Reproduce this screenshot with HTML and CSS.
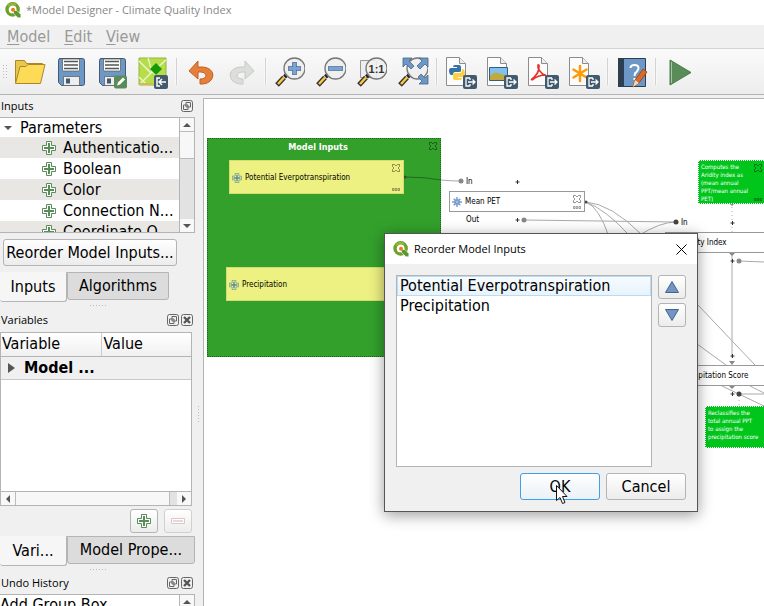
FILE: index.html
```html
<!DOCTYPE html>
<html lang="en">
<head>
    <meta charset="UTF-8">
    <meta name="viewport" content="width=device-width, initial-scale=1.0">
    <title>Model Designer - Climate Quality Index</title>
    <link rel="stylesheet" href="styles.css">
</head>
<body>
    <!-- Shared icons -->
    <svg class="sprite" aria-hidden="true">
        <symbol id="logo" viewBox="0 0 16 16">
            <circle cx="7.6" cy="7.4" r="5.6" fill="none" stroke="#6fa02c" stroke-width="3.4"/>
            <path d="M3 4.5A5.6 5.6 0 0 1 11 3" fill="none" stroke="#93b72f" stroke-width="2"/>
            <path d="M8.5 8.5h3.4l4 4v3.3h-3l-4.4-4.4z" fill="#5c9632" stroke="#fff" stroke-width=".6"/>
            <circle cx="8" cy="7.8" r="2" fill="#ee7913"/>
        </symbol>
        <symbol id="plus" viewBox="0 0 14 14">
            <path d="M4.5.5h5v4h4v5h-4v4h-5v-4h-4v-5h4z" fill="#fff" stroke="#5a8c5a"/>
            <path d="M6 2h2v4h4v2H8v4H6V8H2V6h4z" fill="#5a8c5a"/>
        </symbol>
        <symbol id="page" viewBox="0 0 30 30">
            <path d="M4.5.5h13l6 6v22h-19z" fill="#fcfcfc" stroke="#8c8c8c"/>
            <path d="M17.5.5v6h6" fill="#eee" stroke="#8c8c8c"/>
        </symbol>
        <symbol id="export" viewBox="0 0 14 14">
            <rect width="14" height="14" rx="2" fill="#415a6e"/>
            <path d="M7 3H3v8h4M5 7h7M9.5 4.5 12 7 9.5 9.5M7 3v2M7 9v2" fill="none" stroke="#fff" stroke-width="1.3"/>
        </symbol>
        <symbol id="floppy" viewBox="0 0 30 30">
            <path d="M3.5 1.5h23q2 0 2 2v23q0 2-2 2h-21l-3-3v-22q0-2 2-2z" fill="#6d97c4" stroke="#415a75"/>
            <path d="M6.5 2h17v11q0 1-1 1h-15q-1 0-1-1z" fill="#fcfcfc" stroke="#555753" stroke-width=".7"/>
            <path d="M8 4.5h14M8 8h14M8 11.5h14" stroke="#555753" stroke-width="1.4"/>
            <path d="M7.500 19.500h16v9h-16z" fill="#eee" stroke="#555753" stroke-width=".7"/>
            <path d="M10 21.500h4v5h-4z" fill="#415a75"/>
        </symbol>
        <symbol id="lens" viewBox="0 0 30 30">
            <path d="M2 28 9 20.500" stroke="#333" stroke-width="5"/>
            <path d="M3 27 9 20.500" stroke="#fcc93b" stroke-width="2.500"/>
            <path d="m9.500 20 3-3" stroke="#222" stroke-width="4"/>
            <circle cx="19.500" cy="11.500" r="10.500" fill="#eee" fill-opacity=".9" stroke="#777" stroke-width="1.300"/>
        </symbol>
        <symbol id="float" viewBox="0 0 12 12">
            <rect x=".5" y=".5" width="11" height="11" rx="2" fill="none" stroke="#666"/>
            <path d="M5 2.500h4.500V7H5zM2.500 5H7v4.500H2.500z" fill="#f0f0f0" stroke="#666"/>
        </symbol>
        <symbol id="close" viewBox="0 0 12 12">
            <rect x=".5" y=".5" width="11" height="11" rx="2" fill="none" stroke="#666"/>
            <path d="m3 3 6 6M9 3 3 9" stroke="#555" stroke-width="2.400"/>
        </symbol>
        <symbol id="node-x" viewBox="0 0 8 8">
            <path d="M.5.5h2L4 2 5.500.5h2v2L6 4l1.500 1.500v2h-2L4 6 2.500 7.500h-2v-2L2 4 .5 2.500z" fill="none" stroke="#000" stroke-opacity=".45" stroke-width=".9"/>
        </symbol>
        <symbol id="node-dots" viewBox="0 0 8 3">
            <path d="M.5.500h1.500v2H.5zM3.200.500h1.500v2H3.200zM6 .500h1.500v2H6z" fill="none" stroke="#000" stroke-opacity=".45" stroke-width=".8"/>
        </symbol>
        <symbol id="gear" viewBox="0 0 12 12">
            <path d="M6 0v12M0 6h12M2 2l8 8M10 2l-8 8" stroke="#7c9fd0" stroke-width="1.800"/>
            <circle cx="6" cy="6" r="3.500" fill="#7c9fd0"/>
            <circle cx="6" cy="6" r="1" fill="#dbe6f4"/>
        </symbol>
    </svg>

    <header class="titlebar">
        <svg class="logo"><use href="#logo"/></svg>
        <span>*Model Designer - Climate Quality Index</span>
    </header>

    <nav class="menubar">
        <button class="menu"><u>M</u>odel</button>
        <button class="menu"><u>E</u>dit</button>
        <button class="menu"><u>V</u>iew</button>
    </nav>

    <div class="toolbar">
        <span class="grip"></span>
        <button class="tool" aria-label="Open model">
            <svg viewBox="0 0 30 30"><path d="M.5 25.500v-22h9l2 3h16v4" fill="#e7c74c" stroke="#a8882a"/><path d="M.5 26.500 5 9.500h6l2-2h17L25.500 26.500z" fill="#fddb56" stroke="#a8882a"/></svg>
        </button>
        <button class="tool" aria-label="Save model"><svg><use href="#floppy"/></svg></button>
        <button class="tool" aria-label="Save model as">
            <svg viewBox="0 0 30 30"><use href="#floppy" width="30" height="30"/><rect x="17" y="18.500" width="13" height="13" rx="2" fill="#5a8c5a"/><path d="m20 28.500 1-3 5-5 2 2-5 5z" fill="#fff"/></svg>
        </button>
        <button class="tool" aria-label="Save model in project">
            <svg viewBox="0 0 30 30"><path d="M1 1h27v27H1z" fill="#b6dd4c" stroke="#96b63c"/><path d="m1 4 12 12L28 3M13 16 1 28M10 1l4 14 14 9M1 20l8 8" fill="none" stroke="#eef7d2" stroke-width="1.300"/><path d="M1 26h14v2H1z" fill="#d4bc50"/><path d="m18 6 6 6-6 6-6-6z" fill="#169a03"/><rect x="16" y="18" width="14" height="14" rx="2" fill="#415a6e"/><path d="M22 21h-3v8h3M28 25h-7M24 22l-3 3 3 3" fill="none" stroke="#fff" stroke-width="1.500"/></svg>
        </button>
        <span class="separator"></span>
        <button class="tool" aria-label="Undo">
            <svg viewBox="0 0 30 30"><path d="m3 14 9-10v6h5q9 1 10 8-1 8-10 9h-3v-5q6 0 6-4-1-3-5-3h-3v7z" fill="#e67f3c" stroke="#c06224"/></svg>
        </button>
        <button class="tool" aria-label="Redo" disabled>
            <svg viewBox="0 0 30 30"><path d="m27 14-9-10v6h-5q-9 1-10 8 1 8 10 9h3v-5q-6 0-6-4 1-3 5-3h3v7z" fill="#dcdedb" stroke="#c8cac7"/></svg>
        </button>
        <span class="separator"></span>
        <button class="tool" aria-label="Zoom in">
            <svg viewBox="0 0 30 30"><use href="#lens" width="30" height="30"/><path d="M19.500 5v13M13 11.500h13" stroke="#44648a" stroke-width="4.500"/><path d="M19.500 5.500v12M13.500 11.500h12" stroke="#7aa3d4" stroke-width="3"/></svg>
        </button>
        <button class="tool" aria-label="Zoom out">
            <svg viewBox="0 0 30 30"><use href="#lens" width="30" height="30"/><path d="M12 11.500h15" stroke="#44648a" stroke-width="4.500"/><path d="M12.500 11.500h14" stroke="#7aa3d4" stroke-width="3"/></svg>
        </button>
        <button class="tool" aria-label="Zoom to 100%">
            <svg viewBox="0 0 30 30"><path d="M3.500 3.500h16v17h-16z" fill="#eee" stroke="#999"/><use href="#lens" width="30" height="30"/><text x="19.500" y="16" class="ratio">1:1</text></svg>
        </button>
        <button class="tool" aria-label="Zoom full">
            <svg viewBox="0 0 30 30"><use href="#lens" width="30" height="30"/><path d="M5 1h9l-3 3 5 5-3 3-5-5-3 3zM30 1v9l-3-3-5 5-3-3 5-5-3-3zM30 27h-9l3-3-4-4 3-3 4 4 3-3z" fill="#6d97c4" stroke="#44648a" stroke-width=".8"/></svg>
        </button>
        <span class="separator"></span>
        <button class="tool" aria-label="Export as Python script">
            <svg viewBox="0 0 30 30"><use href="#page" x="-4" width="30" height="30"/><path d="M9 8h4q2 0 2 2v4q0 1-2 1H9q-2 0-2 3H5q-2-1-2-4t2-3h6v-1H7q0-2 2-2z" fill="#3572a5"/><path d="M13 23H9q-2 0-2-2v-3q0-2 2-2h5q2 0 2-4h1q2 1 2 5t-2 3h-5v1h4q0 2-3 2z" fill="#fdcf41"/><use href="#export" x="17" y="18" width="14" height="14"/></svg>
        </button>
        <button class="tool" aria-label="Export as image">
            <svg viewBox="0 0 30 30"><use href="#page" x="-4" width="30" height="30"/><path d="M2.500 10.500h18v13h-18z" fill="#82c0ee" stroke="#345d7c"/><path d="M3 19q4-5 8-3t9 2v5H3z" fill="#c0a93e"/><use href="#export" x="17" y="18" width="14" height="14"/></svg>
        </button>
        <button class="tool" aria-label="Export as PDF">
            <svg viewBox="0 0 30 30"><use href="#page" x="-4" width="30" height="30"/><path d="M3 23q8-6 8-13 0-3-1-2-1 6 8 11M4 23q6-5 14-5" fill="none" stroke="#e5312b" stroke-width="1.700"/><use href="#export" x="17" y="18" width="14" height="14"/></svg>
        </button>
        <button class="tool" aria-label="Export as SVG">
            <svg viewBox="0 0 30 30"><use href="#page" x="-4" width="30" height="30"/><path d="M11 9v15M4.500 12.500l13 8M17.500 12.500l-13 8" stroke="#fc9c08" stroke-width="2.500" stroke-linecap="round"/><use href="#export" x="17" y="18" width="14" height="14"/></svg>
        </button>
        <span class="separator"></span>
        <button class="tool" aria-label="Edit model help">
            <svg viewBox="0 0 30 30"><path d="M1.500 1.500h27v28h-27z" fill="#6d97c4" stroke="#2c3e50"/><path d="M1 1h6v29H1z" fill="#2c3e50"/><path d="M13.500 11q0-3 4-3 4 0 4 3 0 2-2 4-2 1-2 4M17.500 21v2" fill="none" stroke="#fff" stroke-width="2"/><path d="m16 30 2-7 8-11 4 3-8 11z" fill="#dc6a25" stroke="#8c4418" stroke-width=".8"/><path d="m16 30 2-7 4 3z" fill="#f1d9bb"/></svg>
        </button>
        <span class="separator"></span>
        <button class="tool" aria-label="Run model">
            <svg viewBox="0 0 30 30"><path d="M5 3v25l21-12.500z" fill="#5a8c5a" stroke="#4a7a4a"/><path d="M6.500 5v21" stroke="#a5c5a5"/></svg>
        </button>
    </div>

    <div class="workspace">
        <aside class="sidebar">
            <section class="dock">
                <div class="dock-title">
                    <h2>Inputs</h2>
                    <button class="dock-button" aria-label="Float inputs"><svg><use href="#float"/></svg></button>
                </div>
                <div class="tree">
                    <ul class="tree-list">
                        <li class="tree-root"><span class="arrow-down"></span>Parameters</li>
                        <li class="tree-item"><svg><use href="#plus"/></svg>Authenticatio...</li>
                        <li class="tree-item"><svg><use href="#plus"/></svg>Boolean</li>
                        <li class="tree-item"><svg><use href="#plus"/></svg>Color</li>
                        <li class="tree-item"><svg><use href="#plus"/></svg>Connection N...</li>
                        <li class="tree-item"><svg><use href="#plus"/></svg>Coordinate O...</li>
                    </ul>
                    <div class="scroll-y">
                        <span class="scroll-end"><i class="arrow-up"></i></span>
                        <span class="thumb"></span>
                        <span class="scroll-end"><i class="arrow-down"></i></span>
                    </div>
                </div>
                <button class="button reorder">Reorder Model Inputs...</button>
                <div class="tabs">
                    <button class="tab active">Inputs</button>
                    <button class="tab">Algorithms</button>
                </div>
            </section>
            <div class="splitter"></div>

            <section class="dock">
                <div class="dock-title tall">
                    <h2>Variables</h2>
                    <button class="dock-button" aria-label="Float variables"><svg><use href="#float"/></svg></button>
                    <button class="dock-button" aria-label="Close variables"><svg><use href="#close"/></svg></button>
                </div>
                <div class="variables">
                    <table>
                        <thead>
                            <tr><th class="name-column">Variable</th><th>Value</th></tr>
                        </thead>
                        <tbody>
                            <tr><td colspan="2"><span class="arrow-right"></span>Model ...</td></tr>
                        </tbody>
                    </table>
                    <div class="scroll-x">
                        <span class="scroll-end"><i class="arrow-left"></i></span>
                        <span class="thumb"></span>
                        <span class="scroll-end"><i class="arrow-right"></i></span>
                    </div>
                </div>
                <div class="variable-actions">
                    <button class="button square" aria-label="Add variable"><svg class="plus-icon"><use href="#plus"/></svg></button>
                    <button class="button square" aria-label="Remove variable" disabled><svg class="plus-icon" viewBox="0 0 14 14"><path d="M.5 4.500h13v5H.5z" fill="#fff" stroke="#dcc8c8"/><path d="M2 6h10v2H2z" fill="#e8d8d8"/></svg></button>
                </div>
                <div class="tabs">
                    <button class="tab active">Vari...</button>
                    <button class="tab wide">Model Prope...</button>
                </div>
            </section>
            <div class="splitter"></div>

            <section class="dock history">
                <div class="dock-title">
                    <h2>Undo History</h2>
                    <button class="dock-button" aria-label="Float history"><svg><use href="#float"/></svg></button>
                    <button class="dock-button" aria-label="Close history"><svg><use href="#close"/></svg></button>
                </div>
                <div class="tree">
                    <ul class="tree-list">
                        <li class="history-item">Add Group Box</li>
                    </ul>
                    <div class="scroll-y">
                        <span class="scroll-end"><i class="arrow-up"></i></span>
                    </div>
                </div>
            </section>
        </aside>
        <div class="splitter-v"></div>

        <main class="canvas">
            <div class="group">Model Inputs<svg class="node-x"><use href="#node-x"/></svg></div>

            <!-- Connections, in window coordinates -->
            <svg class="links" viewBox="204 99 560 507">
                <g fill="none" stroke="#aaa">
                    <path d="M405 177q20 0 36 3" stroke="#1f6b1a"/>
                    <path d="M441 180q10 1 20 1M524 220l152 2M586 202q13 5 23 35M586 202q20 8 42 32M586 202q25 2 55 32M638 236q22-14 38-14"/>
                    <path d="M732 253v105M739 261l25 1M697 304l58 61M697 344l29 21M722 386l42 20M750 386l14 7M739 394h25"/>
                    <path d="M732 203v29M739 396v11" stroke-dasharray="1 3"/>
                </g>
                <g fill="#888">
                    <circle cx="461" cy="181" r="2.500"/>
                    <circle cx="524" cy="220" r="2.500"/>
                    <circle cx="739" cy="261" r="2.500"/>
                    <path d="M729 203h6l-3 3zM729 253h6l-3 3zM729 361h6l-3 4zM729 386h6l-3 3z"/>
                </g>
                <g fill="#444">
                    <circle cx="405" cy="177" r="1.500"/>
                    <circle cx="586" cy="202" r="1.500"/>
                    <circle cx="676" cy="222" r="2.500"/>
                    <circle cx="739" cy="394" r="2.500"/>
                </g>
                <path d="M515.500 182h4M517.500 180v4M515.500 220h4M517.500 218v4M730.500 223h4M732.500 221v4M730.500 261h4M732.500 259v4M730.500 356h4M732.500 354v4M730.500 394h4M732.500 392v4" stroke="#333"/>
            </svg>

            <div class="node input evapo"><svg class="node-icon"><use href="#plus"/></svg>Potential Everpotranspiration<svg class="node-x"><use href="#node-x"/></svg><svg class="node-dots"><use href="#node-dots"/></svg></div>
            <div class="node input precip"><svg class="node-icon"><use href="#plus"/></svg>Precipitation</div>
            <span class="port mean-in">In</span>
            <div class="node mean"><svg class="node-icon"><use href="#gear"/></svg>Mean PET<svg class="node-x"><use href="#node-x"/></svg><svg class="node-dots"><use href="#node-dots"/></svg></div>
            <span class="port mean-out">Out</span>
            <span class="port aridity-in">In</span>
            <div class="node aridity"><svg class="node-icon"><use href="#gear"/></svg>Aridity Index</div>
            <div class="node score"><svg class="node-icon"><use href="#gear"/></svg>Precipitation Score</div>
            <div class="comment aridity-note">Computes the<br>Aridity index as<br>(mean annual<br>PPT/mean annual<br>PET)<svg class="node-x"><use href="#node-x"/></svg><svg class="node-dots"><use href="#node-dots"/></svg></div>
            <div class="comment score-note">Reclassifies the<br>total annual PPT<br>to assign the<br>precipitation score</div>
        </main>
    </div>

    <!-- Reorder dialog -->
    <div class="dialog" role="dialog" aria-labelledby="dialog-title">
        <div class="dialog-title">
            <svg class="logo"><use href="#logo"/></svg>
            <h2 id="dialog-title">Reorder Model Inputs</h2>
            <button class="dialog-close" aria-label="Close"><svg viewBox="0 0 11 11"><path d="m.5.5 10 10M10.500.5l-10 10" stroke="#000"/></svg></button>
        </div>
        <div class="dialog-body">
            <ul class="input-list">
                <li class="selected">Potential Everpotranspiration</li>
                <li>Precipitation</li>
            </ul>
            <div class="order-buttons">
                <button class="button square" aria-label="Move up"><svg class="order-icon" viewBox="0 0 14 12"><path d="m7 .5 6.500 11H.5z" fill="#6d97c4" stroke="#44648a"/></svg></button>
                <button class="button square" aria-label="Move down"><svg class="order-icon" viewBox="0 0 14 12"><path d="m7 11.500 6.500-11H.5z" fill="#6d97c4" stroke="#44648a"/></svg></button>
            </div>
        </div>
        <div class="dialog-footer">
            <button class="button default">OK</button>
            <button class="button">Cancel</button>
        </div>
        <svg class="cursor" viewBox="0 0 12 19"><path d="M.5.500v15l3.500-3 2.500 6 2.500-1-2.500-6H11z" fill="#fff" stroke="#111"/></svg>
    </div>
</body>
</html>
```

FILE: styles.css
```css
* {
    box-sizing: border-box;
}

body {
    margin: 0;
    height: 100vh;
    display: flex;
    flex-direction: column;
    overflow: hidden;
    position: relative;
    background: #f0f0f0;
    color: #000;
    font-family: "DejaVu Sans Condensed", "Noto Sans", sans-serif;
    font-size: 16px;
    line-height: 20px;
}

button {
    font: inherit;
    color: inherit;
    border: none;
    background: none;
    padding: 0;
}

ul {
    list-style: none;
    margin: 0;
    padding: 0;
}

h2 {
    margin: 0;
    font-weight: normal;
    font-size: 11px;
}

svg {
    display: block;
    flex: none;
}

.sprite {
    position: absolute;
    width: 0;
    height: 0;
}

.logo {
    width: 16px;
    height: 16px;
}

/* Title bar and menu */
.titlebar {
    display: flex;
    align-items: center;
    gap: 5px;
    height: 25px;
    padding: 0 5px 6px;
    background: #fff;
    color: #888;
    font-family: "Open Sans", "Noto Sans", sans-serif;
    font-size: 11px;
}

.menubar {
    display: flex;
    gap: 14px;
    height: 24px;
    padding: 2px 7px 1px;
    color: #999;
    border-bottom: 1px solid #d4d4d4;
}

.menu u {
    text-underline-offset: 2px;
}

/* Toolbar */
.toolbar {
    display: flex;
    align-items: center;
    gap: 4px;
    height: 46px;
    padding-left: 2px;
    background: linear-gradient(#fafafa, #ededed);
    border-bottom: 1px solid #b4b4b4;
}

.grip {
    width: 5px;
    height: 16px;
    background: radial-gradient(#bbb 1px, transparent 1px) 0 0 / 3px 3px;
}

.tool {
    display: flex;
    justify-content: center;
    width: 37px;
}

.tool svg {
    width: 30px;
    height: 30px;
    overflow: visible;
}

.ratio {
    font: bold 11px "Liberation Sans", sans-serif;
    text-anchor: middle;
    fill: #333;
}

.separator {
    width: 3px;
    height: 27px;
    background: #d2d2d2;
    border: solid #f8f8f8;
    border-width: 0 1px;
}

/* Docks */
.workspace {
    flex: 1;
    display: flex;
    min-height: 0;
}

.sidebar {
    display: flex;
    flex-direction: column;
    width: 195px;
    flex: none;
    overflow: hidden;
}

.dock {
    flex: none;
}

.dock-title {
    display: flex;
    align-items: center;
    gap: 2px;
    height: 22px;
    padding: 0 2px 0 1px;
}

.dock-title.tall {
    height: 24px;
}

.dock-title h2 {
    flex: 1;
    font-family: "Open Sans", "Noto Sans", sans-serif;
}

.dock-button svg {
    width: 12px;
    height: 12px;
}

.tree {
    display: flex;
    height: 116px;
    background: #fff;
    border: 1px solid #b4b4b4;
    border-left: none;
}

.tree-list {
    flex: 1;
    overflow: hidden;
    white-space: nowrap;
}

.tree-root,
.tree-item {
    display: flex;
    align-items: center;
    height: 21px;
}

.tree-root {
    gap: 8px;
    height: 19px;
    padding-left: 4px;
}

.tree-item {
    gap: 7px;
    padding-left: 42px;
}

.tree-item:nth-child(even) {
    background: #e8e7e3;
}

.tree-item svg,
.plus-icon {
    width: 14px;
    height: 14px;
}

.arrow-up,
.arrow-down,
.arrow-left,
.arrow-right {
    display: inline-block;
    border: 4px solid transparent;
}

.arrow-up {
    border-top: none;
    border-bottom-color: #555;
}

.arrow-down {
    border-bottom: none;
    border-top-color: #555;
}

.arrow-left {
    border-left: none;
    border-right-color: #555;
}

.arrow-right {
    border-right: none;
    border-left-color: #555;
}

.scroll-y,
.scroll-x {
    display: flex;
    justify-content: space-between;
    background: #e2e2e2;
}

.scroll-y {
    flex-direction: column;
    width: 15px;
    border-left: 1px solid #b4b4b4;
}

.scroll-x {
    height: 14px;
    border-top: 1px solid #b4b4b4;
}

.scroll-end {
    display: flex;
    align-items: center;
    justify-content: center;
    width: 14px;
    height: 13px;
    background: #f8f8f8;
}

.thumb {
    background: #f7f7f7;
    border: 1px solid #bbb;
}

.scroll-y .thumb {
    height: 28px;
    margin-bottom: auto;
    border-width: 1px 0;
}

.scroll-x .thumb {
    width: 155px;
    margin-right: auto;
    border-width: 0 1px;
}

.button {
    height: 27px;
    background: linear-gradient(#fff, #ececec);
    border: 1px solid #b4b4b4;
    border-radius: 3px;
    white-space: nowrap;
}

.reorder {
    width: 174px;
    margin: 6px 3px;
}

.tabs {
    display: flex;
    align-items: flex-start;
    height: 30px;
}

.tab {
    width: 102px;
    height: 28px;
    background: #dcdcdc;
    border: 1px solid #b4b4b4;
    border-radius: 0 0 3px 3px;
}

.tab.active {
    flex: 0 1 67px;
    height: 30px;
    background: #f6f6f6;
    border-top: none;
    border-left: none;
}

.tab.wide {
    flex: 1;
}

.splitter {
    flex: none;
    height: 6px;
    margin: 0 auto;
    width: 18px;
    background: radial-gradient(#bbb 1px, transparent 1px) 0 2px / 3px 3px repeat-x;
}

.splitter-v {
    width: 3px;
    height: 18px;
    margin: 310px 3px 0 2px;
    background: radial-gradient(#bbb 1px, transparent 1px) 0 0 / 3px 3px;
}

/* Variables table */
.variables {
    display: flex;
    flex-direction: column;
    justify-content: space-between;
    height: 174px;
    margin-right: 3px;
    background: #fff;
    border: 1px solid #b4b4b4;
}

.variables table {
    width: 100%;
    border-collapse: collapse;
    table-layout: fixed;
}

.variables th {
    height: 23px;
    padding: 1px 2px;
    text-align: left;
    font-weight: normal;
    background: linear-gradient(#fff, #f0f0f0);
    border-bottom: 1px solid #b4b4b4;
}

.variables .name-column {
    width: 100px;
    padding-left: 1px;
    border-right: 1px solid #ccc;
}

.variables td {
    height: 23px;
    padding: 1px 7px;
    font-weight: bold;
    background: #f0f0f0;
    border-bottom: 1px solid #c8c8c8;
}

.variables td .arrow-right {
    margin-right: 9px;
    border-width: 5px 0 5px 7px;
}

.variable-actions {
    display: flex;
    justify-content: flex-end;
    gap: 6px;
    padding: 3px;
}

.square {
    display: flex;
    align-items: center;
    justify-content: center;
    width: 28px;
    height: 24px;
}

.square:disabled {
    border-color: #d0d0d0;
}

.history-item {
    height: 20px;
}

/* Model canvas */
.canvas {
    position: relative;
    flex: 1;
    margin-top: 3px;
    overflow: hidden;
    background: #fff;
    border: solid #b4b4b4;
    border-width: 1px 0 0 1px;
    font-size: 8px;
    line-height: 10px;
}

.links {
    position: absolute;
    left: 0;
    top: 0;
    width: 560px;
    height: 507px;
}

.group {
    position: absolute;
    left: 3px;
    top: 39px;
    width: 234px;
    height: 219px;
    padding: 3px 12px 0 0;
    background: #33a02c;
    border: 1px dotted #1d6b18;
    color: #fff;
    font-size: 9px;
    font-weight: bold;
    text-align: center;
}

.node {
    position: absolute;
    display: flex;
    align-items: center;
    gap: 3px;
    height: 21px;
    padding: 1px 0 0 2px;
    background: #fff;
    border: 1px solid #999;
    white-space: nowrap;
}

.node-icon {
    width: 10px;
    height: 10px;
}

.node-x,
.node-dots {
    position: absolute;
    right: 3px;
    width: 8px;
}

.node-x {
    top: 3px;
    height: 8px;
}

.node-dots {
    bottom: 2px;
    height: 3px;
}

.input {
    height: 34px;
    background: #edf182;
    border-color: #d8dc70;
}

.evapo {
    left: 25px;
    top: 61px;
    width: 175px;
}

.precip {
    left: 22px;
    top: 168px;
    width: 175px;
}

.mean {
    left: 245px;
    top: 92px;
    width: 136px;
}

.aridity {
    left: 461px;
    top: 133px;
    width: 136px;
}

.score {
    left: 461px;
    top: 266px;
    width: 136px;
}

.port {
    position: absolute;
}

.mean-in {
    left: 262px;
    top: 78px;
}

.mean-out {
    left: 262px;
    top: 116px;
}

.aridity-in {
    left: 477px;
    top: 119px;
}

.comment {
    position: absolute;
    padding: 2px;
    background: #00c51b;
    border: 1px dotted #fff;
    color: #fff;
    font-size: 6px;
    line-height: 8px;
    white-space: nowrap;
}

.aridity-note {
    left: 494px;
    top: 61px;
    width: 68px;
    height: 44px;
}

.score-note {
    left: 501px;
    top: 307px;
    width: 68px;
    height: 42px;
}

/* Reorder dialog */
.dialog {
    position: absolute;
    left: 384px;
    top: 233px;
    width: 314px;
    background: #f0f0f0;
    border: 1px solid #555;
    box-shadow: 0 3px 14px rgba(0, 0, 0, 0.4);
}

.dialog-title {
    display: flex;
    align-items: center;
    gap: 5px;
    height: 30px;
    padding: 0 10px 0 8px;
    background: #fff;
}

.dialog-title h2 {
    flex: 1;
    font-family: "Open Sans", "Noto Sans", sans-serif;
}

.dialog-close svg {
    width: 11px;
    height: 11px;
}

.dialog-body {
    display: flex;
    gap: 6px;
    padding: 11px 11px 6px;
}

.input-list {
    flex: 1;
    height: 192px;
    background: #fff;
    border: 1px solid #b4b4b4;
}

.input-list li {
    height: 20px;
    padding: 0 2px;
    border: 1px solid transparent;
    line-height: 18px;
}

.input-list .selected {
    background: linear-gradient(#f6fbff, #e8f3fc);
    border-color: #b8dcf4;
}

.order-buttons {
    display: flex;
    flex-direction: column;
    gap: 4px;
}

.order-icon {
    width: 14px;
    height: 12px;
}

.dialog-footer {
    display: flex;
    justify-content: flex-end;
    gap: 6px;
    padding: 0 11px 11px;
}

.dialog-footer .button {
    width: 80px;
}

.dialog-footer .default {
    border-color: #3fa0ea;
    background: linear-gradient(#fff, #eaf1f7);
}

.cursor {
    position: absolute;
    left: 171px;
    top: 251px;
    width: 12px;
    height: 19px;
}
```
